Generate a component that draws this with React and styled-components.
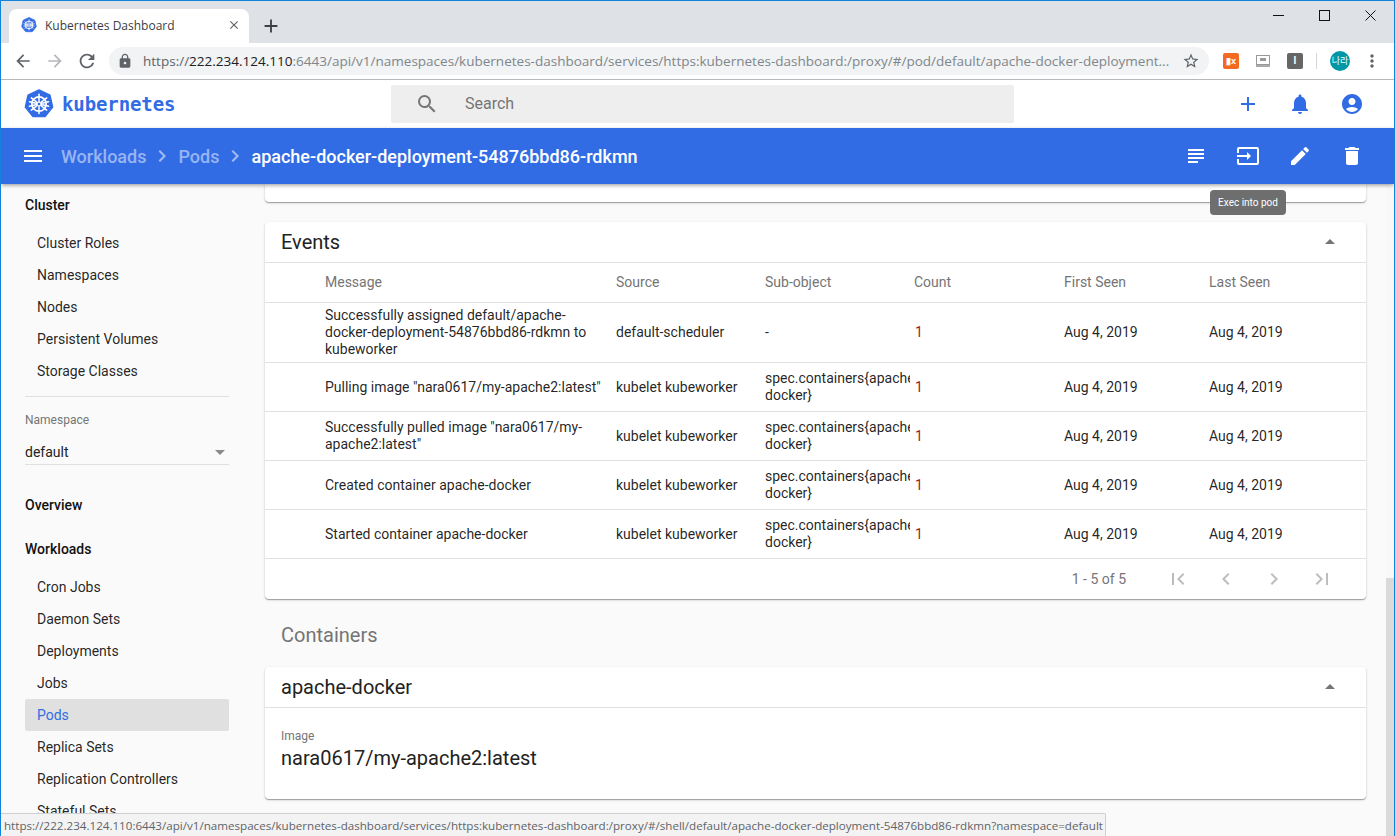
import React from "react";
import styled, { createGlobalStyle } from "styled-components";
import {
  MdAdd, MdNotifications, MdAccountCircle, MdMenu, MdSubject, MdInput, MdEdit, MdDelete,
  MdFirstPage, MdChevronLeft, MdChevronRight, MdLastPage, MdArrowDropUp, MdArrowDropDown,
  MdSearch, MdLock, MdStarBorder, MdClose, MdArrowBack, MdArrowForward, MdRefresh, MdMoreVert,
} from "react-icons/md";

const Global = createGlobalStyle`
  html, body { margin: 0; padding: 0; height: 100%; overflow: hidden; }
  * { box-sizing: border-box; }
  body { font-family: Roboto, "Liberation Sans", sans-serif; color: rgba(0,0,0,.87); }
`;

const Win = styled.div`
  position: relative; width: 1395px; height: 836px; border: 1px solid #1283da; border-bottom: 0;
  display: flex; flex-direction: column; overflow: hidden; background: #fafafa;
`;
const TabStrip = styled.div`
  height: 42px; flex: none; background: #dee1e6; display: flex; align-items: flex-end; padding-left: 8px;
`;
const Tab = styled.div`
  width: 240px; height: 34px; background: #fff; border-radius: 8px 8px 0 0; display: flex; align-items: center;
  padding: 0 8px 2px 12px; font: 12px "Open Sans", "Noto Sans", sans-serif; color: #3c4043;
`;
const TabTitle = styled.span` margin-left: 8px; flex: 1; `;
const NewTab = styled.div` width: 44px; height: 34px; display: flex; align-items: center; justify-content: center; color: #3c4043; `;
const WinButtons = styled.div`
  margin-left: auto; align-self: flex-start; display: flex; height: 30px; padding-right: 1px;
`;
const WinBtn = styled.div` width: 46px; height: 28px; display: flex; align-items: center; justify-content: center; `;

const AddrRow = styled.div`
  height: 37px; flex: none; background: #fff; border-bottom: 1px solid #b6b8bb; display: flex; align-items: flex-start; padding: 4px 0 0 6px;
`;
const NavBtn = styled.div`
  width: 32px; height: 28px; display: flex; align-items: center; justify-content: center;
  color: ${p => (p.$off ? "#b5b7ba" : "#5f6368")};
`;
const Pill = styled.div`
  width: 1100px; height: 28px; margin-left: 6px; border-radius: 14px; background: #f1f3f4; display: flex; align-items: center; padding: 0 9px 0 8px; color: #5f6368;
`;
const Url = styled.div`
  flex: 1; margin-left: 10px; font: 13.53px/28px "Open Sans", "Noto Sans", sans-serif; color: #80868b; white-space: nowrap; overflow: hidden; letter-spacing: 0;
  b { font-weight: 400; color: #202124; }
  i { font-style: normal; color: #5f6368; }
`;
const ExtRow = styled.div` display: flex; align-items: center; height: 28px; margin-left: 14px; `;
const ExtOrange = styled.div`
  width: 16px; height: 16px; border-radius: 2px; background: #f26b21; color: #fff; font: bold 9px/16px "Liberation Sans", sans-serif; text-align: center;
`;
const ExtCell = styled.div` width: 16px; height: 16px; margin-left: 16px; display: flex; align-items: center; justify-content: center; `;
const ExtDark = styled.div`
  width: 16px; height: 16px; margin-left: 16px; border-radius: 2px; background: #666; color: #fff; font: bold 10px/16px "Liberation Sans", sans-serif; text-align: center;
`;
const ExtSep = styled.div` width: 1px; height: 16px; margin: 0 13px 0 13px; background: #d5d7da; `;
const Avatar = styled.div`
  width: 20px; height: 20px; border-radius: 50%; background: #0097a7; color: #e8ffff; font: 9px/20px "Noto Sans CJK KR", sans-serif; text-align: center;
`;
const More = styled.div` margin-left: 12px; width: 20px; display: flex; justify-content: center; color: #5f6368; `;

const KubeBar = styled.div` height: 48px; flex: none; background: #fff; display: flex; align-items: center; padding: 0 22px 0 23px; `;
const Brand = styled.div` width: 367px; display: flex; align-items: center; gap: 8px; `;
const BrandName = styled.span`
  font: bold 19px "DejaVu Sans Mono", monospace; color: #326ce5; letter-spacing: -.1px;
`;
const SearchBox = styled.div`
  width: 623px; height: 38px; background: #eee; border-radius: 2px; display: flex; align-items: center; padding-left: 24px; color: #757575; font-size: 16px;
`;
const SearchText = styled.span` margin-left: 26px; margin-bottom: 1px; `;
const IconSet = styled.div` margin-left: auto; display: flex; gap: 12px; color: ${p => p.$color}; `;
const IconBtn = styled.div` width: 40px; height: 40px; display: flex; align-items: center; justify-content: center; `;

const BlueBar = styled.div`
  height: 56px; flex: none; background: #326ce5; color: #fff; display: flex; align-items: center; padding: 0 22px 0 20px; position: relative; z-index: 2;
  box-shadow: 0 2px 4px -1px rgba(0,0,0,.3), 0 1px 4px rgba(0,0,0,.15);
`;
const Crumbs = styled.div` margin-left: 16px; display: flex; align-items: center; font-size: 18px; font-weight: 500; `;
const Crumb = styled.span` color: ${p => (p.$cur ? "#fff" : "rgba(255,255,255,.5)")}; `;
const CrumbSep = styled.span` display: flex; width: 32px; justify-content: center; color: rgba(255,255,255,.55); `;

const Body = styled.div` flex: 1; min-height: 0; display: flex; `;
const Side = styled.nav` width: 244px; flex: none; padding: 5px 16px 0 24px; overflow: hidden; font-size: 14px; `;
const Head = styled.div` height: 32px; line-height: 32px; font-weight: 500; color: #111; margin-top: ${p => p.$top || 0}px; margin-bottom: ${p => p.$bottom || 0}px; `;
const Item = styled.div`
  height: 32px; line-height: 32px; padding-left: 12px; border-radius: 2px; flex: none;
  background: ${p => (p.$on ? "#e0e0e0" : "transparent")}; color: ${p => (p.$on ? "#326ce5" : "rgba(0,0,0,.87)")};
`;
const Rule = styled.div` height: 1px; background: #e0e0e0; margin: 9px 0 0; `;
const NsLabel = styled.div` font-size: 12px; color: #757575; margin-top: 16px; `;
const NsSelect = styled.div`
  height: 30px; margin-top: 8px; padding-top: 4px; display: flex; justify-content: space-between; align-items: center; border-bottom: 1px solid #e0e0e0; color: #222;
`;
const NsIcon = styled.span` display: flex; margin-right: -3px; color: #8a8a8a; `;

const Main = styled.main` flex: 1; min-width: 0; padding: 0 20px; overflow: hidden; `;
const Card = styled.section`
  background: #fff; border-radius: 4px; margin-top: ${p => p.$top || 0}px;
  box-shadow: 0 1px 1px rgba(0,0,0,.3), 0 1px 3px rgba(0,0,0,.14);
`;
const Stub = styled(Card)` height: 18px; border-radius: 0 0 4px 4px; `;
const CardHead = styled.div`
  height: 41px; display: flex; align-items: center; justify-content: space-between; padding: 0 24px 0 16px; font-size: 20px; border-bottom: 1px solid #e0e0e0; color: #222;
`;
const Caret = styled.span` display: flex; color: #757575; `;
const Row = styled.div`
  display: grid; grid-template-columns: 60px 291px 149px 149px 150px 145px 1fr; align-items: center;
  min-height: ${p => p.$h}px; font-size: 14px; line-height: 17px; border-bottom: 1px solid #e0e0e0; color: ${p => (p.$head ? "#757575" : "rgba(0,0,0,.87)")};
`;
const Cell = styled.div`
  grid-column: ${p => p.$col}; margin-right: ${p => p.$mr || 0}px; overflow: hidden;
`;
const CountCell = styled(Cell)` color: #a01c1c; margin-left: 1px; `;
const Pager = styled.div`
  height: 40px; display: flex; align-items: center; justify-content: flex-end; padding-right: 20px; color: #757575; font-size: 14px;
`;
const PagerText = styled.span` margin-right: 28px; `;
const PagerBtn = styled.span` width: 48px; display: flex; justify-content: center; color: #bdbdbd; `;
const SectionTitle = styled.h2` margin: 24px 0 20px 16px; font-size: 20px; line-height: 24px; font-weight: 400; color: #757575; `;
const CardBody = styled.div` padding: 21px 16px 27px; height: 91px; `;
const Label = styled.div` font-size: 12px; line-height: 14px; color: #757575; `;
const Value = styled.div` font-size: 20px; line-height: 28px; margin-top: 1px; color: #222; `;

const Track = styled.div` width: 8px; flex: none; background: #f8f8f8; padding-top: 394px; `;
const Thumb = styled.div` height: 100%; background: #dadada; `;

const Tooltip = styled.div`
  position: absolute; left: 1209px; top: 189px; width: 76px; height: 25px; background: #6e6e6e; color: #fff; border-radius: 4px;
  font-size: 10px; line-height: 25px; text-align: center; z-index: 5;
`;
const Status = styled.div`
  position: absolute; left: 0; bottom: 0; height: 23px; width: 1105px; background: #f3f3f3; border-top: 1px solid #cfcfcf; border-right: 1px solid #cfcfcf;
  font: 11.62px/23px "Open Sans", "Noto Sans", sans-serif; color: #5f6368; padding-left: 3px; white-space: nowrap; overflow: hidden; z-index: 6; border-top-right-radius: 2px;
`;

const Logo = ({ size }) => (
  <svg width={size} height={size} viewBox="0 0 32 32">
    <polygon points="16,1 27.7,6.6 30.6,19.3 22.5,29.4 9.5,29.4 1.4,19.3 4.3,6.6" fill="#326ce5" stroke="#326ce5" strokeWidth="1.5" strokeLinejoin="round" />
    <circle cx="16" cy="16" r="7.6" fill="none" stroke="#fff" strokeWidth="1.8" />
    <g stroke="#fff" strokeWidth="1.6" strokeLinecap="round">
      <line x1="16" y1="5.5" x2="16" y2="26" />
      <line x1="7.8" y1="9.5" x2="24.2" y2="22.5" />
      <line x1="24.2" y1="9.5" x2="7.8" y2="22.5" />
      <line x1="5.8" y1="18.4" x2="26.2" y2="13.6" />
      <line x1="26.2" y1="18.4" x2="5.8" y2="13.6" />
    </g>
    <circle cx="16" cy="16" r="2" fill="#326ce5" stroke="#fff" strokeWidth="1" />
  </svg>
);

const events = [
  { h: 60, msg: "Successfully assigned default/apache-docker-deployment-54876bbd86-rdkmn to kubeworker", src: "default-scheduler", sub: "-" },
  { h: 49, msg: 'Pulling image "nara0617/my-apache2:latest"', src: "kubelet kubeworker", sub: "spec.containers{apache-docker}" },
  { h: 49, msg: 'Successfully pulled image "nara0617/my-apache2:latest"', src: "kubelet kubeworker", sub: "spec.containers{apache-docker}" },
  { h: 49, msg: "Created container apache-docker", src: "kubelet kubeworker", sub: "spec.containers{apache-docker}" },
  { h: 49, msg: "Started container apache-docker", src: "kubelet kubeworker", sub: "spec.containers{apache-docker}" },
];
const cluster = ["Cluster Roles", "Namespaces", "Nodes", "Persistent Volumes", "Storage Classes"];
const workloads = ["Cron Jobs", "Daemon Sets", "Deployments", "Jobs", "Pods", "Replica Sets", "Replication Controllers", "Stateful Sets"];

export default function App() {
  return (
    <Win>
      <Global />
      <TabStrip>
        <Tab>
          <Logo size={16} />
          <TabTitle>Kubernetes Dashboard</TabTitle>
          <MdClose size={14} color="#5f6368" />
        </Tab>
        <NewTab><MdAdd size={22} /></NewTab>
        <WinButtons>
          <WinBtn><svg width="11" height="11" viewBox="0 0 11 11"><path d="M0 5.5h11" stroke="#111" /></svg></WinBtn>
          <WinBtn><svg width="11" height="11" viewBox="0 0 11 11"><rect x=".5" y=".5" width="10" height="10" fill="none" stroke="#111" /></svg></WinBtn>
          <WinBtn><svg width="11" height="11" viewBox="0 0 11 11"><path d="M.5.5l10 10M10.5.5l-10 10" stroke="#111" /></svg></WinBtn>
        </WinButtons>
      </TabStrip>
      <AddrRow>
        <NavBtn><MdArrowBack size={20} /></NavBtn>
        <NavBtn $off><MdArrowForward size={20} /></NavBtn>
        <NavBtn><MdRefresh size={22} /></NavBtn>
        <Pill>
          <MdLock size={16} />
          <Url><i>https://</i><b>222.234.124.110</b>:6443/api/v1/namespaces/kubernetes-dashboard/services/https:kubernetes-dashboard:/proxy/#/pod/default/apache-docker-deployment...</Url>
          <MdStarBorder size={18} />
        </Pill>
        <ExtRow>
          <ExtOrange>▮x</ExtOrange>
          <ExtCell>
            <svg width="14" height="12" viewBox="0 0 14 12"><rect x=".5" y=".5" width="13" height="9" fill="#fff" stroke="#999" /><rect x="4" y="3" width="6" height="3" fill="#999" /><rect x="0" y="10" width="14" height="2" fill="#aaa" /></svg>
          </ExtCell>
          <ExtDark>I</ExtDark>
          <ExtSep />
          <Avatar>나라</Avatar>
          <More><MdMoreVert size={20} /></More>
        </ExtRow>
      </AddrRow>
      <KubeBar>
        <Brand><Logo size={30} /><BrandName>kubernetes</BrandName></Brand>
        <SearchBox><MdSearch size={24} /><SearchText>Search</SearchText></SearchBox>
        <IconSet $color="#326ce5">
          <IconBtn><MdAdd size={24} /></IconBtn>
          <IconBtn><MdNotifications size={24} /></IconBtn>
          <IconBtn><MdAccountCircle size={24} /></IconBtn>
        </IconSet>
      </KubeBar>
      <BlueBar>
        <MdMenu size={24} />
        <Crumbs>
          <Crumb>Workloads</Crumb>
          <CrumbSep><MdChevronRight size={24} /></CrumbSep>
          <Crumb>Pods</Crumb>
          <CrumbSep><MdChevronRight size={24} /></CrumbSep>
          <Crumb $cur>apache-docker-deployment-54876bbd86-rdkmn</Crumb>
        </Crumbs>
        <IconSet $color="#fff">
          <IconBtn><MdSubject size={24} /></IconBtn>
          <IconBtn><MdInput size={24} /></IconBtn>
          <IconBtn><MdEdit size={24} /></IconBtn>
          <IconBtn><MdDelete size={24} /></IconBtn>
        </IconSet>
      </BlueBar>
      <Body>
        <Side>
          <Head $bottom={6}>Cluster</Head>
          {cluster.map(c => <Item key={c}>{c}</Item>)}
          <Rule />
          <NsLabel>Namespace</NsLabel>
          <NsSelect>default<NsIcon><MdArrowDropDown size={24} /></NsIcon></NsSelect>
          <Head $top={24}>Overview</Head>
          <Head $top={12} $bottom={6}>Workloads</Head>
          {workloads.map(w => <Item key={w} $on={w === "Pods"}>{w}</Item>)}
        </Side>
        <Main>
          <Stub />
          <Card $top={20}>
            <CardHead>Events<Caret><MdArrowDropUp size={24} /></Caret></CardHead>
            <Row $head $h={40}>
              <Cell $col={2}>Message</Cell>
              <Cell $col={3}>Source</Cell>
              <Cell $col={4}>Sub-object</Cell>
              <Cell $col={5}>Count</Cell>
              <Cell $col={6}>First Seen</Cell>
              <Cell $col={7}>Last Seen</Cell>
            </Row>
            {events.map(e => (
              <Row key={e.msg} $h={e.h}>
                <Cell $col={2} $mr={14}>{e.msg}</Cell>
                <Cell $col={3}>{e.src}</Cell>
                <Cell $col={4} $mr={4}>{e.sub}</Cell>
                <CountCell $col={5}>1</CountCell>
                <Cell $col={6}>Aug 4, 2019</Cell>
                <Cell $col={7}>Aug 4, 2019</Cell>
              </Row>
            ))}
            <Pager>
              <PagerText>1 - 5 of 5</PagerText>
              <PagerBtn><MdFirstPage size={24} /></PagerBtn>
              <PagerBtn><MdChevronLeft size={24} /></PagerBtn>
              <PagerBtn><MdChevronRight size={24} /></PagerBtn>
              <PagerBtn><MdLastPage size={24} /></PagerBtn>
            </Pager>
          </Card>
          <SectionTitle>Containers</SectionTitle>
          <Card>
            <CardHead>apache-docker<Caret><MdArrowDropUp size={24} /></Caret></CardHead>
            <CardBody>
              <Label>Image</Label>
              <Value>nara0617/my-apache2:latest</Value>
            </CardBody>
          </Card>
        </Main>
        <Track><Thumb /></Track>
      </Body>
      <Tooltip>Exec into pod</Tooltip>
      <Status>https://222.234.124.110:6443/api/v1/namespaces/kubernetes-dashboard/services/https:kubernetes-dashboard:/proxy/#/shell/default/apache-docker-deployment-54876bbd86-rdkmn?namespace=default</Status>
    </Win>
  );
}
